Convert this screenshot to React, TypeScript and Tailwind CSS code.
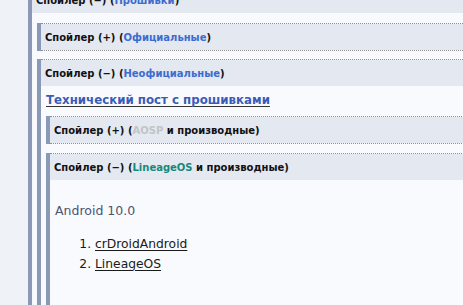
import type { ReactNode } from 'react'

type SpoilerProps = {
  title: ReactNode
  open?: boolean
  children?: ReactNode
  className?: string
  bodyClassName?: string
}

function Spoiler({ title, open = false, children, className = '', bodyClassName = '' }: SpoilerProps) {
  return (
    <div className={`flex ${className}`}>
      <div className="w-[4px] shrink-0 bg-[#8a99b6]" />
      <div className="flex-1 min-w-0 border-y border-r border-dotted border-[#8e8e8e]">
        <div className="h-[26px] flex items-center px-[4px] bg-[#e3e8f1] text-[10px] font-bold text-[#111] whitespace-nowrap">
          <span>
            Спойлер {open ? '(−)' : '(+)'} ({title})
          </span>
        </div>
        {open && <div className={`bg-[#f8fafd] pl-[5px] ${bodyClassName}`}>{children}</div>}
      </div>
    </div>
  )
}

export default function App() {
  return (
    <div
      className="h-[305px] w-[463px] overflow-hidden bg-[#eff3f8] pl-[28px]"
      style={{ fontFamily: '"DejaVu Sans", Verdana, sans-serif' }}
    >
      <div className="-mt-[14px] w-[470px]">
        <Spoiler open title={<span className="text-[#3c6ccf]">Прошивки</span>} bodyClassName="pt-[10px] h-[400px]">
          <Spoiler title={<span className="text-[#3c6ccf]">Официальные</span>} />
          <Spoiler
            open
            className="mt-[8px]"
            title={<span className="text-[#3c6ccf]">Неофициальные</span>}
            bodyClassName="pt-[6px] h-[400px]"
          >
            <a
              href="#"
              className="block leading-[16px] text-[11.8px] font-bold text-[#3a5cb8] underline decoration-[#333] underline-offset-2"
            >
              Технический пост с прошивками
            </a>
            <Spoiler
              className="mt-[8px]"
              title={
                <>
                  <span className="text-[#c2c4c8]">AOSP</span> и производные
                </>
              }
            />
            <Spoiler
              open
              className="mt-[9px]"
              title={
                <>
                  <span className="text-[#17897c]">LineageOS</span> и производные
                </>
              }
              bodyClassName="pt-[23px] h-[400px]"
            >
              <p className="text-[12.5px] leading-[16px] text-[#4b5572]">Android 10.0</p>
              <ol className="mt-[15px] list-decimal pl-[40px] text-[12.3px] leading-[20px] text-[#1a1a1a]">
                <li>
                  <a href="#" className="underline underline-offset-2">crDroidAndroid</a>
                </li>
                <li>
                  <a href="#" className="underline underline-offset-2">LineageOS</a>
                </li>
              </ol>
            </Spoiler>
          </Spoiler>
        </Spoiler>
      </div>
    </div>
  )
}
